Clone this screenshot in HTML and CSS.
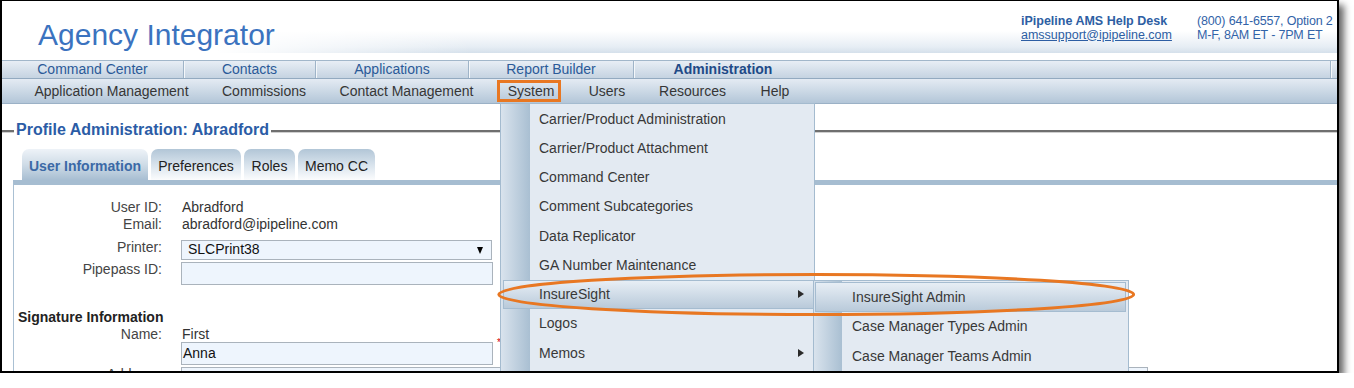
FILE: index.html
```html
<!DOCTYPE html>
<html lang="en">
<head>
<meta charset="utf-8">
<title>Agency Integrator</title>
<link rel="stylesheet" href="styles.css">
</head>
<body>
<div class="shot">
  <header class="header">
    <h1 class="brand">Agency Integrator</h1>
    <div class="helpdesk">
      <div class="hd-title">iPipeline AMS Help Desk</div>
      <div class="hd-phone">(800) 641-6557, Option 2</div>
      <a class="hd-mail" href="#">amssupport@ipipeline.com</a>
      <div class="hd-hours">M-F, 8AM ET - 7PM ET</div>
    </div>
  </header>

  <nav class="topnav">
    <span class="tn tn-sep tn-cc">Command Center</span>
    <span class="tn tn-sep tn-ct">Contacts</span>
    <span class="tn tn-sep tn-ap">Applications</span>
    <span class="tn tn-sep tn-rb">Report Builder</span>
    <span class="tn tn-ad">Administration</span>
    <span class="tn tn-sep tn-fill"></span>
    <span class="tn tn-end"></span>
  </nav>

  <nav class="subnav">
    <span class="sn sn-am">Application Management</span>
    <span class="sn sn-co">Commissions</span>
    <span class="sn sn-cm">Contact Management</span>
    <span class="sn sn-sys">System</span>
    <span class="sn sn-us">Users</span>
    <span class="sn sn-re">Resources</span>
    <span class="sn sn-he">Help</span>
  </nav>

  <main class="main">
    <div class="legend-row">
      <span class="legend-dash"></span>
      <span class="legend-text">Profile Administration: Abradford</span>
      <span class="legend-line"></span>
    </div>

    <div class="tabs">
      <span class="tab tab-active tab-ui">User Information</span>
      <span class="tab tab-pr">Preferences</span>
      <span class="tab tab-ro">Roles</span>
      <span class="tab tab-mc">Memo CC</span>
    </div>

    <section class="panel">
      <div class="frow text-row">
        <span class="flabel">User ID:</span>
        <span class="value">Abradford</span>
      </div>
      <div class="frow text-row">
        <span class="flabel">Email:</span>
        <span class="value">abradford@ipipeline.com</span>
      </div>
      <div class="frow input-row row-printer">
        <span class="flabel">Printer:</span>
        <div class="select">
          <span class="select-text">SLCPrint38</span>
          <span class="select-arrow"></span>
        </div>
      </div>
      <div class="frow input-row row-pipe">
        <span class="flabel">Pipepass ID:</span>
        <div class="input"></div>
      </div>
      <div class="sig-title">Signature Information</div>
      <div class="frow name-row">
        <span class="flabel">Name:</span>
        <span class="value">First</span>
      </div>
      <div class="frow input-row row-first">
        <span class="flabel"></span>
        <div class="input"><span class="input-text">Anna</span></div>
        <span class="req">*</span>
      </div>
      <div class="frow input-row row-addr">
        <span class="flabel">Address:</span>
        <div class="input input-wide"></div>
      </div>
    </section>
  </main>

  <div class="menu">
    <div class="mi">Carrier/Product Administration</div>
    <div class="mi">Carrier/Product Attachment</div>
    <div class="mi">Command Center</div>
    <div class="mi">Comment Subcategories</div>
    <div class="mi">Data Replicator</div>
    <div class="mi">GA Number Maintenance</div>
    <div class="mi mi-hl"><span>InsureSight</span><span class="arrow"></span></div>
    <div class="mi">Logos</div>
    <div class="mi"><span>Memos</span><span class="arrow"></span></div>
  </div>

  <div class="submenu">
    <div class="si si-hl">InsureSight Admin</div>
    <div class="si">Case Manager Types Admin</div>
    <div class="si">Case Manager Teams Admin</div>
  </div>

  <svg class="annot" width="1335" height="370" viewBox="0 0 1335 370" aria-hidden="true">
    <ellipse cx="814.2" cy="293.5" rx="317.4" ry="20" fill="none" stroke="#e87722" stroke-width="3"/>
  </svg>
</div>
</body>
</html>
```

FILE: styles.css
```css
*, *::before, *::after { box-sizing: border-box; }

html, body {
  margin: 0;
  padding: 0;
  background: #ffffff;
}

body {
  font-family: "Liberation Sans", Arial, sans-serif;
  font-size: 14px;
  color: #333;
}

.shot {
  position: relative;
  width: 1339px;
  height: 373px;
  border-style: solid;
  border-color: #000;
  border-width: 1px 2px 2px 2px;
  overflow: hidden;
  background: #fff;
  box-shadow: 5px 5px 7px rgba(0, 0, 0, 0.6);
  display: flex;
  flex-direction: column;
}

/* ---------- header ---------- */
.header {
  display: flex;
  align-items: flex-start;
  height: 52px;
  margin-bottom: 7px;
  flex: none;
  background:
    linear-gradient(to right, #fff 0, #fff 215px, rgba(255,255,255,0) 470px),
    linear-gradient(to bottom, #fff 0, #fff 30px, #e6edf4 46px, #d5e0eb 52px);
}

.brand {
  margin: 17px 0 0 0;
  padding-left: 36px;
  font-size: 30px;
  line-height: 34px;
  font-weight: normal;
  color: #3b73bf;
}

.helpdesk {
  margin-left: auto;
  margin-top: 14px;
  width: 316px;
  display: grid;
  grid-template-columns: 176px 140px;
  font-size: 12.5px;
  line-height: 13.5px;
  color: #3263a8;
  white-space: nowrap;
}

.hd-title {
  font-weight: bold;
  color: #2d5ea3;
}

.hd-mail {
  color: #2d5ea3;
  text-decoration: underline;
}

.hd-phone,
.hd-hours {
  letter-spacing: -0.17px;
}

/* ---------- top nav ---------- */
.topnav {
  flex: none;
  display: flex;
  height: 19px;
  border-top: 1px solid #a2b7ca;
  border-bottom: 1px solid #93aac0;
  background: linear-gradient(to bottom, #e8eef5, #c5d3e1);
  line-height: 17px;
  color: #2b5a98;
}

.tn {
  flex: none;
  text-align: center;
  white-space: nowrap;
}

.tn-sep {
  border-right: 1px solid #9fb4c8;
  box-shadow: 1px 0 0 #f4f7fa;
}

.tn-cc { width: 182px; }
.tn-ct { width: 132px; }
.tn-ap { width: 153px; }
.tn-rb { width: 165px; }
.tn-ad { width: 178px; font-weight: bold; color: #1e4a87; }
.tn-fill { flex: 1; }
.tn-end { width: 6px; }

/* ---------- sub nav ---------- */
.subnav {
  flex: none;
  display: flex;
  height: 25px;
  padding-left: 16px;
  border-bottom: 1px solid #9bb1c6;
  background: linear-gradient(to bottom, #e4ebf3, #b3c6d8);
  line-height: 24px;
  color: #363636;
}

.sn {
  flex: none;
  text-align: center;
  white-space: nowrap;
  position: relative;
}

.sn-am { width: 187px; }
.sn-co { width: 118px; }
.sn-cm { width: 167px; }
.sn-sys { width: 82px; }
.sn-us { width: 70px; }
.sn-re { width: 101px; }
.sn-he { width: 64px; }

.sn-sys::after {
  content: "";
  position: absolute;
  left: 7px;
  top: 1px;
  width: 64px;
  height: 22px;
  border: 3px solid #e87722;
}

/* ---------- main / fieldset ---------- */
.main {
  flex: 1;
  display: flex;
  flex-direction: column;
}

.legend-row {
  display: flex;
  align-items: flex-start;
  margin-top: 17px;
  height: 18px;
}

.legend-dash,
.legend-line {
  height: 3px;
  margin-top: 9px;
  border-top: 2px solid #6f6f6f;
  border-bottom: 1px solid #cfcfcf;
}

.legend-dash {
  width: 12px;
  margin-right: 2px;
}

.legend-line {
  flex: 1;
  margin-left: 2px;
}

.legend-text {
  font-size: 16px;
  line-height: 18px;
  font-weight: bold;
  color: #2b5ca6;
  white-space: nowrap;
}

/* ---------- tabs ---------- */
.tabs {
  display: flex;
  gap: 3px;
  margin: 10px 0 0 20px;
  height: 31px;
}

.tab {
  height: 31px;
  padding-top: 3px;
  line-height: 28px;
  text-align: center;
  border-radius: 7px 7px 0 0;
  white-space: nowrap;
  color: #222;
  background: linear-gradient(to bottom, #b2c6d7 0, #dbe5ee 55%, #fbfcfd 100%);
}

.tab-active {
  font-weight: bold;
  color: #3b69a6;
  background: linear-gradient(to bottom, #eef3f8 0, #cfdce7 50%, #a8bed2 100%);
}

.tab-ui { width: 126px; }
.tab-pr { width: 90px; }
.tab-ro { width: 51px; }
.tab-mc { width: 77px; }

/* ---------- panel / form ---------- */
.panel {
  flex: 1;
  margin-left: 11px;
  border-top: 5px solid #a6bdd1;
  border-left: 1px solid #aac0d3;
  padding-top: 14px;
}

.frow {
  display: flex;
  align-items: flex-start;
}

.flabel {
  flex: none;
  width: 148px;
  margin-right: 19px;
  text-align: right;
  color: #444;
  white-space: nowrap;
}

.value {
  padding-left: 1px;
  color: #333;
  white-space: nowrap;
}

.text-row { line-height: 17px; }
.name-row { line-height: 16px; }
.input-row .flabel { line-height: 14px; }

.row-printer { margin-top: 7px; }
.row-pipe { margin-top: 2px; }
.row-addr { margin-top: 2px; }

.sig-title {
  margin-top: 24px;
  padding-left: 4px;
  line-height: 17px;
  font-weight: bold;
  color: #222;
}

.select {
  display: flex;
  align-items: flex-start;
  justify-content: space-between;
  width: 311px;
  height: 20px;
  padding: 0 8px 0 6px;
  border: 1px solid #aab3bc;
  background: #eef5fd;
}

.select-text {
  line-height: 16px;
  color: #111;
}

.select-arrow {
  width: 0;
  height: 0;
  margin-top: 6px;
  border-top: 7px solid #000;
  border-left: 3.5px solid transparent;
  border-right: 3.5px solid transparent;
}

.input {
  width: 312px;
  height: 23px;
  padding-left: 1px;
  border: 1px solid #aab3bc;
  background: #eef5fd;
  line-height: 21px;
}

.input-wide { width: 967px; }

.input-text {
  color: #111;
}

.req {
  margin-left: 4px;
  margin-top: -4px;
  font-size: 10px;
  line-height: 10px;
  color: #d40000;
}

/* ---------- dropdown menus ---------- */
.menu {
  position: absolute;
  left: 498px;
  top: 102px;
  width: 315px;
  height: 300px;
  border: 1px solid #a4bbcf;
  background: linear-gradient(to right, #d9e3ed 0, #a9bfd2 29px, #e3eaf2 29px);
  color: #383838;
  z-index: 5;
}

.mi {
  display: flex;
  align-items: center;
  justify-content: space-between;
  height: 29.25px;
  padding: 0 10px 0 38px;
  white-space: nowrap;
}

.mi-hl {
  margin-left: 2px;
  padding: 0 9px 0 35px;
  border: 1px solid #a5bcd0;
  background: linear-gradient(to bottom, #e7eef5, #b9cada);
}

.arrow {
  width: 0;
  height: 0;
  border-left: 6px solid #2a2a2a;
  border-top: 4px solid transparent;
  border-bottom: 4px solid transparent;
}

.submenu {
  position: absolute;
  left: 811px;
  top: 279px;
  width: 316px;
  height: 120px;
  padding-top: 1px;
  border: 1px solid #a4bbcf;
  background: linear-gradient(to right, #d9e3ed 0, #a9bfd2 28px, #e3eaf2 28px);
  color: #383838;
  z-index: 6;
}

.si {
  display: flex;
  align-items: center;
  height: 29.5px;
  padding-left: 38px;
  white-space: nowrap;
}

.si-hl {
  margin: 0 2px 0 1px;
  padding-left: 36px;
  border: 1px solid #a5bcd0;
  background: linear-gradient(to bottom, #e7eef5, #b9cada);
}

.annot {
  position: absolute;
  left: 0;
  top: 0;
  z-index: 10;
  pointer-events: none;
}
```
